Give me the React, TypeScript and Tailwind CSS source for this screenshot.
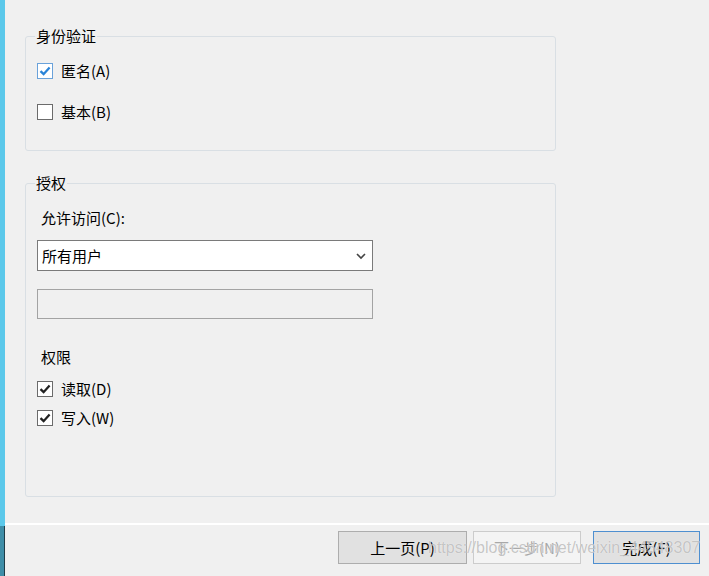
import React from 'react';

const CheckBox: React.FC<{ checked?: boolean; focused?: boolean; label: string }> = ({ checked, focused, label }) => (
  <div className="flex h-5 items-center">
    <span
      className={`flex h-[16px] w-[16px] items-center justify-center border bg-white ${
        focused ? 'border-[#6aa2da]' : 'border-[#6b6b6b]'
      }`}
    >
      {checked && (
        <svg width="14" height="14" viewBox="0 0 14 14">
          <path
            d="M2.5 7.2 L5.6 10.2 L11.6 3.6"
            fill="none"
            stroke={focused ? '#2a84d8' : '#222222'}
            strokeWidth="2.3"
          />
        </svg>
      )}
    </span>
    <span className="ml-[8px]">{label}</span>
  </div>
);

export default function App() {
  return (
    <div className="relative flex h-[576px] w-[709px] overflow-hidden bg-[#f0f0f0] font-['Noto_Sans_CJK_SC',sans-serif] text-[15px] leading-5 text-black">
      {/* left strip */}
      <div className="flex w-[5px] flex-col">
        <div className="h-[526px] bg-[#5bc8ea]" />
        <div className="flex-1 border-r-[1px] border-[#1e3d48] bg-[#3f8ea8]" />
      </div>

      <div className="flex flex-1 flex-col">
        <div className="pl-[20px] pt-[26px]">
          <fieldset className="h-[125px] w-[531px] rounded-[3px] border border-[#d9dfe4] pl-[11px]">
            <legend className="ml-[-2px] px-[1px]">身份验证</legend>
            <div className="mt-[15px]">
              <CheckBox checked focused label="匿名(A)" />
            </div>
            <div className="mt-[21px]">
              <CheckBox label="基本(B)" />
            </div>
          </fieldset>

          <fieldset className="mt-[22px] h-[324px] w-[531px] rounded-[3px] border border-[#d9dfe4] pl-[11px]">
            <legend className="ml-[-2px] px-[1px]">授权</legend>
            <div className="ml-[4px] mt-[15px]">允许访问(C):</div>
            <div className="mt-[12px] flex h-[31px] w-[336px] items-center justify-between border border-[#7a7a7a] bg-white pl-[4px] pr-[6px]">
              <span>所有用户</span>
              <svg width="10" height="8" viewBox="0 0 10 8">
                <path d="M1 2 L5 6 L9 2" fill="none" stroke="#444" strokeWidth="1.6" />
              </svg>
            </div>
            <div className="mt-[18px] h-[30px] w-[336px] border border-[#a3a3a3] bg-[#f0f0f0]" />
            <div className="ml-[4px] mt-[28px]">权限</div>
            <div className="mt-[12px]">
              <CheckBox checked label="读取(D)" />
            </div>
            <div className="mt-[9px]">
              <CheckBox checked label="写入(W)" />
            </div>
          </fieldset>
        </div>

        <div className="mt-[26px] h-[2px] bg-white" />

        <div className="mt-[6px] flex pl-[333px]">
          <button className="h-[33px] w-[129px] border border-[#adadad] bg-[#e1e1e1] text-[15px]">
            上一页(P)
          </button>
          <button className="ml-[6px] h-[33px] w-[108px] border border-[#cccccc] bg-[#f4f4f4] text-[15px] text-[#a8a8a8]">
            下一步(N)
          </button>
          <button className="ml-[12px] h-[33px] w-[107px] border border-[#4e8fd0] bg-[#e1e1e1] text-[15px]">
            完成(F)
          </button>
        </div>
      </div>

      {/* watermark */}
      <div className="pointer-events-none absolute left-[428px] top-[538px] font-['Liberation_Sans',sans-serif] text-[16px] leading-5 text-[rgba(150,150,150,0.55)] [text-shadow:0_0_1px_#fff]">
        https://blog.csdn.net/weixin_44548307
      </div>
    </div>
  );
}
